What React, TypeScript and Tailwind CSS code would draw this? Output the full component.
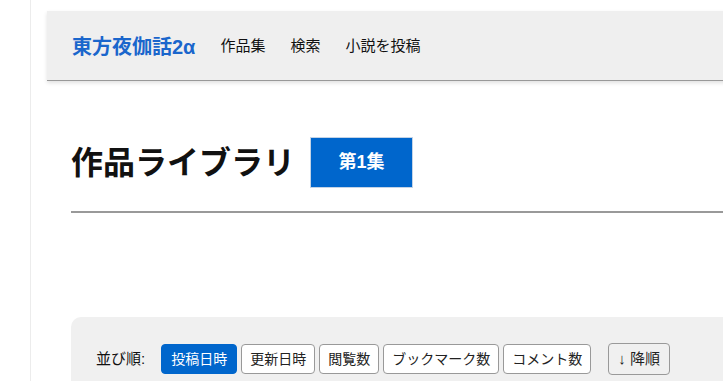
import React from 'react';

const sorts = ['投稿日時', '更新日時', '閲覧数', 'ブックマーク数', 'コメント数'];

export default function App() {
  return (
    <div
      className="min-h-screen bg-white overflow-hidden text-[#111]"
      style={{ fontFamily: '"Liberation Sans", "Noto Sans CJK JP", sans-serif' }}
    >
      <div className="ml-[30px] w-[900px] min-h-[381px] border-l border-[#ececec] pl-4 pt-[11px]">
        {/* Header */}
        <header className="h-[70px] bg-[#efefef] border-b border-[#999] shadow-[0_2px_4px_rgba(0,0,0,0.12)] flex items-center pl-[25px]">
          <a className="text-[20px] font-bold text-[#1a66cc] mr-[25px] pt-[2px]">東方夜伽話2α</a>
          <nav className="flex gap-[25px] text-[15px] pt-[2px]">
            <a>作品集</a>
            <a>検索</a>
            <a>小説を投稿</a>
          </nav>
        </header>

        <main className="px-6">
          {/* Title */}
          <div className="flex items-center gap-[15px] mt-[56px]">
            <h1 className="text-[32px] font-bold leading-none">作品ライブラリ</h1>
            <span className="w-[103px] h-[51px] flex items-center justify-center bg-[#0066cc] border border-[#c3d3e6] text-white text-[18px] font-bold">
              第1集
            </span>
          </div>
          <hr className="mt-[23px] border-0 h-[2px] bg-[#999]" />

          {/* Sort */}
          <div className="mt-[104px] bg-[#f0f0f0] rounded-[10px] pl-[25px] pt-[26px] pb-6 flex items-center">
            <span className="text-[15px] mr-[16px]">並び順:</span>
            <div className="flex gap-1">
              {sorts.map((s, i) => (
                <button
                  key={s}
                  className={
                    i === 0
                      ? 'h-[30px] px-[9px] rounded border border-[#0066cc] bg-[#0066cc] text-white text-[14px]'
                      : 'h-[30px] px-[8px] rounded border border-[#999] bg-white text-[#222] text-[14px]'
                  }
                >
                  {s}
                </button>
              ))}
            </div>
            <button className="ml-[17px] h-[32px] w-[62px] rounded border border-[#999] bg-[#f0f0f0] text-[15px] text-[#222]">
              ↓ 降順
            </button>
          </div>
        </main>
      </div>
    </div>
  );
}
